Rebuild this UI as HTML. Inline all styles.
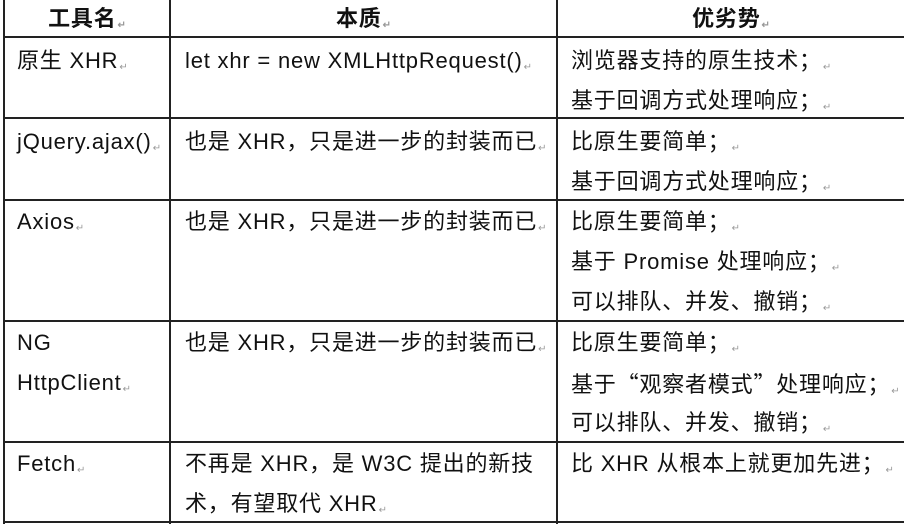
<!DOCTYPE html>
<html><head><meta charset="utf-8"><style>
body{margin:0;width:904px;height:524px;background:#fff;position:relative;overflow:hidden;font-family:"Liberation Sans","Noto Sans CJK SC",sans-serif;color:#111;}
.h{position:absolute;height:2px;background:#222;left:3px;right:0}
.v{position:absolute;width:2px;background:#222;top:0;height:524px}
.t{position:absolute;font-size:22px;letter-spacing:0.8px;white-space:nowrap}
.t div{height:40px;line-height:40px;overflow:visible}
.b{font-weight:bold;text-align:center}
.q{font-family:"Noto Sans CJK SC",sans-serif}
i{font-style:normal;font-size:10px;color:#999;vertical-align:-2px;margin-left:1px;letter-spacing:0}
</style></head><body>
<div class="v" style="left:3px"></div>
<div class="v" style="left:169px"></div>
<div class="v" style="left:556px"></div>
<div class="h" style="top:36px"></div>
<div class="h" style="top:117px"></div>
<div class="h" style="top:199px"></div>
<div class="h" style="top:320px"></div>
<div class="h" style="top:441px"></div>
<div class="h" style="top:521px"></div>

<div class="t b" style="left:5px;width:164px;top:-1px"><div>工具名<i>↵</i></div></div>
<div class="t b" style="left:171px;width:385px;top:-1px"><div>本质<i>↵</i></div></div>
<div class="t b" style="left:558px;width:346px;top:-1px"><div>优劣势<i>↵</i></div></div>

<div class="t" style="left:17px;top:41px"><div>原生 XHR<i>↵</i></div></div>
<div class="t" style="left:185px;top:41px"><div>let xhr = new XMLHttpRequest()<i>↵</i></div></div>
<div class="t" style="left:571px;top:41px"><div>浏览器支持的原生技术；<i>↵</i></div><div>基于回调方式处理响应；<i>↵</i></div></div>

<div class="t" style="left:17px;top:122px"><div>jQuery.ajax()<i>↵</i></div></div>
<div class="t" style="left:185px;top:122px"><div>也是 XHR，只是进一步的封装而已<i>↵</i></div></div>
<div class="t" style="left:571px;top:122px"><div>比原生要简单；<i>↵</i></div><div>基于回调方式处理响应；<i>↵</i></div></div>

<div class="t" style="left:17px;top:202px"><div>Axios<i>↵</i></div></div>
<div class="t" style="left:185px;top:202px"><div>也是 XHR，只是进一步的封装而已<i>↵</i></div></div>
<div class="t" style="left:571px;top:202px"><div>比原生要简单；<i>↵</i></div><div>基于 Promise 处理响应；<i>↵</i></div><div>可以排队、并发、撤销；<i>↵</i></div></div>

<div class="t" style="left:17px;top:323px"><div>NG</div><div>HttpClient<i>↵</i></div></div>
<div class="t" style="left:185px;top:323px"><div>也是 XHR，只是进一步的封装而已<i>↵</i></div></div>
<div class="t" style="left:571px;top:323px"><div>比原生要简单；<i>↵</i></div><div>基于<span class="q">“</span>观察者模式<span class="q">”</span>处理响应；<i>↵</i></div><div>可以排队、并发、撤销；<i>↵</i></div></div>

<div class="t" style="left:17px;top:444px"><div>Fetch<i>↵</i></div></div>
<div class="t" style="left:185px;top:444px"><div>不再是 XHR，是 W3C 提出的新技</div><div>术，有望取代 XHR<i>↵</i></div></div>
<div class="t" style="left:571px;top:444px"><div>比 XHR 从根本上就更加先进；<i>↵</i></div></div>
</body></html>
